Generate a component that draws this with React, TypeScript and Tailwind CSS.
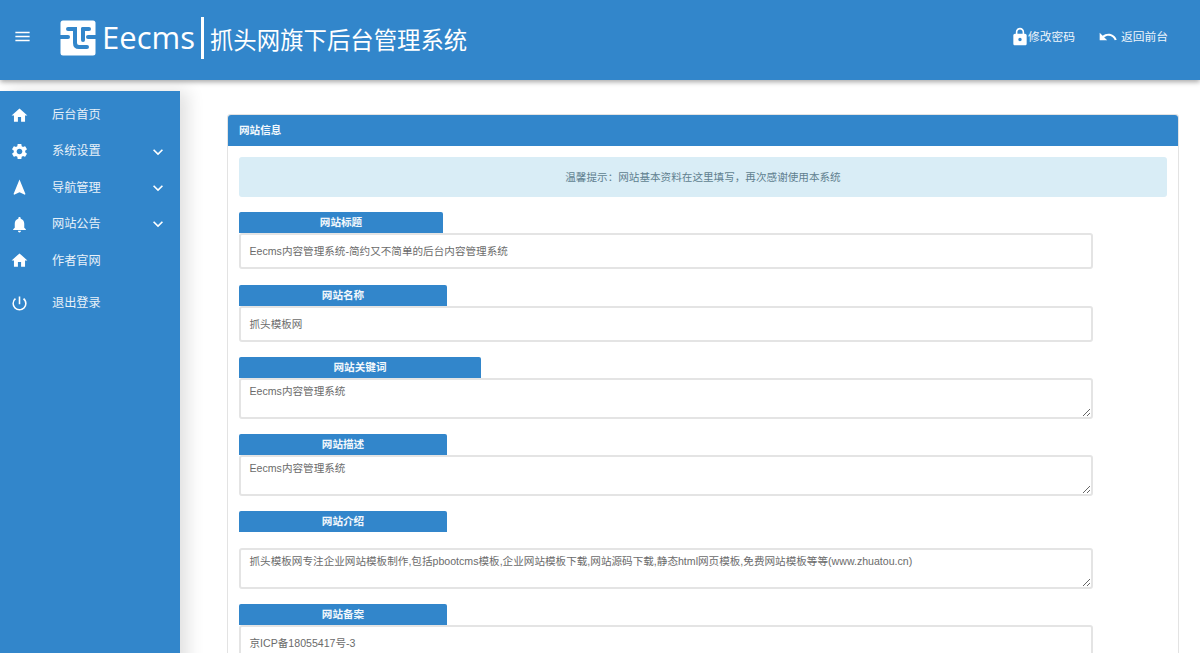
import React from 'react';
import {
  MdMenu,
  MdLock,
  MdUndo,
  MdHome,
  MdSettings,
  MdNavigation,
  MdNotifications,
  MdPowerSettingsNew,
  MdKeyboardArrowDown,
} from 'react-icons/md';

const FONT = '"Liberation Sans", "Noto Sans CJK SC", sans-serif';

function Logo() {
  return (
    <svg width="36" height="36" viewBox="0 0 36 36" className="shrink-0">
      <rect x="0.5" y="0.5" width="35" height="35" rx="2.5" fill="#fff" />
      <g fill="none" stroke="#3286cb" strokeWidth="4" strokeLinecap="round">
        <path d="M8 9 H15 V23 Q15 27 19 27 H27" />
        <path d="M-2 17 H8" />
        <path d="M23 9 H29" />
        <path d="M23 9 V20" />
        <path d="M28 17 H38" />
      </g>
    </svg>
  );
}

function NavItem({ icon, label, hasMenu }: { icon: React.ReactNode; label: string; hasMenu?: boolean }) {
  return (
    <div className="flex h-[36.4px] items-center text-[#e8f1f9]">
      <div className="flex w-[52px] shrink-0 justify-start pl-[9.5px] text-white">{icon}</div>
      <span className="flex-1 text-[12.2px]">{label}</span>
      {hasMenu && <MdKeyboardArrowDown size={20} className="mr-[12px] text-white" />}
    </div>
  );
}

function Label({ text, width }: { text: string; width: string }) {
  return (
    <div className={`flex h-[21px] items-center justify-center rounded-t-[2px] bg-[#3286cb] pt-[1px] text-[10.6px] font-bold text-[#f3f8fc] ${width}`}>
      {text}
    </div>
  );
}

function TextInput({ value }: { value: string }) {
  return (
    <div className="flex h-[36px] w-[854px] items-center rounded-[3px] border-2 border-[#e4e4e4] px-[8.5px] pt-[1px] text-[10.6px] text-[#6b6b6b]">
      {value}
    </div>
  );
}

function TextArea({ value }: { value: string }) {
  return (
    <textarea
      readOnly
      value={value}
      className="block h-[41px] w-[854px] rounded-[3px] border-2 border-[#e4e4e4] px-[8.5px] pt-[4px] text-[10.6px] text-[#6b6b6b] outline-none"
    />
  );
}

export default function App() {
  return (
    <div className="h-[653px] overflow-hidden bg-white" style={{ fontFamily: FONT }}>
      {/* top bar */}
      <header className="relative z-20 flex h-[80px] items-center bg-[#3286cb] text-white shadow-[0_2px_5px_rgba(0,0,0,0.35)]">
        <MdMenu size={19} className="ml-[13px] mr-[28px] -mt-[7px]" />
        <div className="-mt-[5px] flex items-center">
          <Logo />
          <span className="ml-[6px] text-[31px] leading-none" style={{ fontFamily: '"Open Sans", sans-serif' }}>Eecms</span>
          <div className="ml-[6px] h-[42px] w-[3px] bg-white" />
          <span className="ml-[6px] mt-[9px] text-[23.4px] leading-none">抓头网旗下后台管理系统</span>
        </div>
        <div className="ml-auto mr-[32px] -mt-[7px] flex items-center text-[11.75px] text-[#eef5fb]">
          <MdLock size={20} className="mr-[-2px] text-white" />
          <span>修改密码</span>
          <MdUndo size={20} className="ml-[23px] mr-[3px] text-white" />
          <span>返回前台</span>
        </div>
      </header>

      <div className="flex">
        {/* sidebar */}
        <aside className="mt-[11px] h-[600px] w-[180px] shrink-0 bg-[#3286cb] pt-[6px] shadow-[8px_0_16px_rgba(0,0,0,0.12)]">
          <NavItem icon={<MdHome size={19} />} label="后台首页" />
          <NavItem icon={<MdSettings size={19} />} label="系统设置" hasMenu />
          <NavItem icon={<MdNavigation size={19} />} label="导航管理" hasMenu />
          <NavItem icon={<MdNotifications size={19} />} label="网站公告" hasMenu />
          <NavItem icon={<MdHome size={19} />} label="作者官网" />
          <div className="mt-[6px]">
            <NavItem icon={<MdPowerSettingsNew size={19} />} label="退出登录" />
          </div>
        </aside>

        {/* content */}
        <main className="ml-[47px] mt-[34px] h-[600px] w-[952px] rounded-t-[3px] border border-[#e3e3e3]">
          <div className="flex h-[31px] items-center rounded-t-[3px] bg-[#3286cb] pl-[11px] text-[10.6px] font-bold text-[#f3f8fc]">
            网站信息
          </div>
          <div className="px-[11px] pt-[11px]">
            <div className="flex h-[40px] w-[928px] items-center justify-center rounded-[3px] bg-[#d9edf6] pt-[1px] text-[10.6px] text-[#5f7f8f]">
              温馨提示：网站基本资料在这里填写，再次感谢使用本系统
            </div>
            <div className="mt-[15px]">
              <Label text="网站标题" width="w-[204px]" />
              <TextInput value="Eecms内容管理系统-简约又不简单的后台内容管理系统" />
            </div>
            <div className="mt-[16px]">
              <Label text="网站名称" width="w-[208px]" />
              <TextInput value="抓头模板网" />
            </div>
            <div className="mt-[15px]">
              <Label text="网站关键词" width="w-[242px]" />
              <TextArea value="Eecms内容管理系统" />
            </div>
            <div className="mt-[15px]">
              <Label text="网站描述" width="w-[208px]" />
              <TextArea value="Eecms内容管理系统" />
            </div>
            <div className="mt-[15px]">
              <Label text="网站介绍" width="w-[208px]" />
              <div className="mt-[16px]">
                <TextArea value="抓头模板网专注企业网站模板制作,包括pbootcms模板,企业网站模板下载,网站源码下载,静态html网页模板,免费网站模板等等(www.zhuatou.cn)" />
              </div>
            </div>
            <div className="mt-[15px]">
              <Label text="网站备案" width="w-[208px]" />
              <TextInput value="京ICP备18055417号-3" />
            </div>
          </div>
        </main>
      </div>
    </div>
  );
}
